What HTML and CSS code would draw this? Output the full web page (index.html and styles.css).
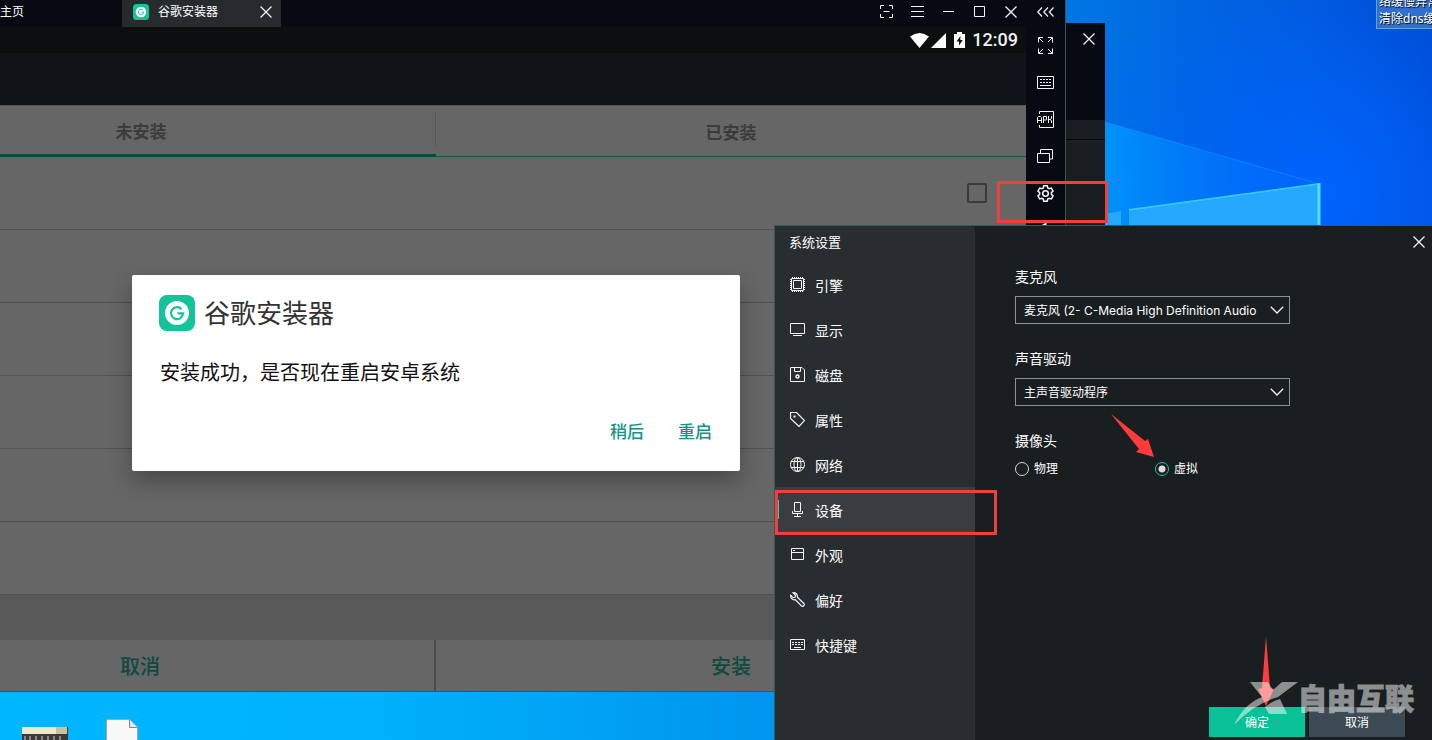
FILE: index.html
```html
<!DOCTYPE html>
<html lang="zh-CN">
<head>
<meta charset="utf-8">
<meta name="viewport" content="width=device-width, initial-scale=1">
<title>系统设置</title>
<link rel="stylesheet" href="styles.css">
</head>
<body>
<svg width="0" height="0" class="sprite" aria-hidden="true">
  <symbol id="close" viewBox="0 0 12 12"><path d="M.5.5l11 11M11.500.5l-11 11" stroke-width="1.300"/></symbol>
  <symbol id="keyboard" viewBox="0 0 17 13"><path d="M.5.5h16v12H.5zM3 3.500h2M6 3.500h2M9 3.500h2M12 3.500h2M3 6.500h2M6 6.500h2M9 6.500h2M12 6.500h2M3 9.500h11"/></symbol>
  <symbol id="chevron" viewBox="0 0 14 8"><path d="M.8.8L7 7 13.200.8" stroke-width="1.300"/></symbol>
  <symbol id="logo" viewBox="0 0 36 36"><rect width="36" height="36" rx="8" fill="#15c39a" stroke="none"/><circle cx="18" cy="18" r="12" fill="#fff" stroke="none"/><path d="M22.500 14.200A6 6 0 1 0 24 18.300H18.500" fill="none" stroke="#15c39a" stroke-width="2.200"/></symbol>
</svg>

<main class="desktop">
  <svg class="wallpaper" viewBox="0 0 327 225" aria-hidden="true">
    <defs><linearGradient id="beam" x1="0" x2="1"><stop offset="0" stop-color="#0098ff" stop-opacity=".85"/><stop offset="1" stop-color="#0068ff" stop-opacity=".25"/></linearGradient></defs>
    <path d="M0 122L214 184 214 225H0z" fill="url(#beam)"/>
    <path d="M0 122L214 184" stroke="#2298ff" stroke-opacity=".5"/>
    <path d="M0 214L16 211V225H0zM24 211L214 185V225H24z" fill="#27a8ff"/>
    <path d="M24 210L214 184" stroke="#35c8ff" stroke-width="2"/>
    <path d="M214 183V225" stroke="#48e5ff" stroke-width="3"/>
  </svg>

  <div class="shortcut">络缓慢异常<br>清除dns缓存</div>
  <svg class="desk-icon calendar" viewBox="0 0 46 40" aria-hidden="true"><path d="M0 0h46v40H0z" fill="#3b3a3a"/><path d="M0 0h45v7H0z" fill="#eee9cb"/><path d="M34 0h11v7H34z" fill="#c9c1a0"/><path d="M3 9v9M8 9v9M14 9v9M20 9v9M26 9v9M32 9v9M38 9v9" stroke="#8b857b" stroke-width="2"/></svg>
  <svg class="desk-icon document" viewBox="0 0 32 40" aria-hidden="true"><path d="M.5.5h23l8 8V40H.5z" fill="#f8f8f8" stroke="#9aa"/><path d="M23.500.5v8h8" fill="#e5e5e5" stroke="#888"/></svg>

  <section class="back-window">
    <header class="back-head"><button class="icon-btn" aria-label="关闭"><svg class="ico s12"><use href="#close"/></svg></button></header>
    <div class="back-row"></div>
    <div class="back-body"></div>
  </section>

  <section class="emulator">
    <div class="emu-main">
      <header class="titlebar">
        <a class="home" href="#">主页</a>
        <div class="app-tab"><svg class="ico s16"><use href="#logo"/></svg><span class="app-name">谷歌安装器</span><button class="icon-btn" aria-label="关闭标签"><svg class="ico s12"><use href="#close"/></svg></button></div>
        <div class="controls">
          <button class="icon-btn" aria-label="截图"><svg class="ico" width="13" height="13" viewBox="0 0 13 13"><path d="M.5 4V.5H4M9 .5h3.500V4M12.500 9v3.500H9M4 12.500H.5V9M3.500 6.500h6"/></svg></button>
          <button class="icon-btn" aria-label="菜单"><svg class="ico" width="13" height="13" viewBox="0 0 13 13"><path d="M0 1.500h13M0 6.500h13M0 11.500h13"/></svg></button>
          <button class="icon-btn" aria-label="最小化"><svg class="ico" width="13" height="13" viewBox="0 0 13 13"><path d="M1 6.500h11"/></svg></button>
          <button class="icon-btn" aria-label="最大化"><svg class="ico" width="13" height="13" viewBox="0 0 13 13"><path d="M1.500 1.500h10v10h-10z"/></svg></button>
          <button class="icon-btn" aria-label="关闭"><svg class="ico s12"><use href="#close"/></svg></button>
        </div>
      </header>
      <div class="screen">
        <div class="statusbar">
          <svg width="19" height="15" viewBox="0 0 19 15"><path d="M0 3.500Q9.500-3.500 19 3.500L9.500 15z" fill="#fff"/></svg>
          <svg class="signal" width="15" height="15" viewBox="0 0 15 15"><path d="M15 0v15H0z" fill="#fff"/></svg>
          <svg class="battery" width="11" height="16" viewBox="0 0 11 16"><path d="M3 0h5v2h3v14H0V2h3z" fill="#fff"/><path d="M6.500 4L2.500 9.500h2.500v4L8.800 8H6.300z" fill="#0b0f10"/></svg>
          <time>12:09</time>
        </div>
        <div class="app">
          <div class="appbar"></div>
          <nav class="tabs"><button class="tab current">未安装</button><button class="tab">已安装</button></nav>
          <div class="list">
            <div class="row"><input class="check" type="checkbox" aria-label="选择"></div>
            <div class="row"></div><div class="row"></div><div class="row"></div><div class="row"></div><div class="row"></div>
          </div>
          <div class="gap"></div>
          <footer class="actions"><button class="action">取消</button><button class="action">安装</button></footer>
          <div class="dialog" role="dialog" aria-labelledby="dlg-title">
            <h1 class="dialog-title" id="dlg-title"><svg class="ico s36"><use href="#logo"/></svg>谷歌安装器</h1>
            <p class="dialog-text">安装成功，是否现在重启安卓系统</p>
            <div class="dialog-actions"><button>稍后</button><button>重启</button></div>
          </div>
        </div>
      </div>
    </div>
    <aside class="toolbar">
      <button class="tool" aria-label="收起"><svg class="ico" width="17" height="10" viewBox="0 0 17 10"><path d="M5 .5L.8 5 5 9.500M11 .5L6.800 5 11 9.500M16.500.5L12.300 5l4.200 4.500" stroke-width="1.200"/></svg></button>
      <button class="tool" aria-label="全屏"><svg class="ico" width="17" height="17" viewBox="0 0 17 17"><path d="M1.500 5.500v-5H6M1.500.5L6 5M11 .5h4.500v5M15.500.5L11 5M1.500 11.500v5H6M1.500 16.500L6 12M11 16.500h4.500v-5M15.500 16.500L11 12"/></svg></button>
      <button class="tool" aria-label="键盘"><svg class="ico" width="17" height="13"><use href="#keyboard"/></svg></button>
      <button class="tool" aria-label="安装APK"><svg class="ico" width="17" height="17" viewBox="0 0 17 17"><path d="M2.500 3V.5h14v16h-14V14M.5 12V6.500l1-1h2l1 1V12M.5 9.500h4M6.500 12V5.500h3v3.500h-3M11.500 5v7M14.500 5v2l-1 1.500h-2M13.500 8.500l1 1.500v2"/></svg></button>
      <button class="tool" aria-label="多开"><svg class="ico" width="17" height="15" viewBox="0 0 17 15"><path d="M.5 4.500h12v9H.5zM3.500 4V.5h12v9.500H13"/></svg></button>
      <button class="tool" aria-label="设置"><svg class="ico gear" width="17" height="17" viewBox="0 0 18 18"><path d="M7.200.8h3.600l.6 2.400 1.400.8 2.400-.7 1.800 3.100-1.800 1.700v1.800l1.800 1.700-1.800 3.100-2.400-.7-1.400.8-.6 2.400H7.200l-.6-2.400-1.400-.8-2.400.7L1 11.600l1.800-1.700V8.100L1 6.400l1.800-3.100 2.400.7 1.400-.8z"/><circle cx="9" cy="9" r="3"/></svg></button>
      <button class="tool" aria-label="更多"><svg class="ico" width="9" height="15" viewBox="0 0 9 15"><path d="M1 3l3.500-2v13" stroke-width="2"/></svg></button>
    </aside>
  </section>
  <div class="mark mark-gear"></div>

  <section class="settings">
    <nav class="side">
      <h2 class="side-title">系统设置</h2>
      <a class="item" href="#"><svg class="ico" width="15" height="15" viewBox="0 0 15 15"><path d="M1.500 1.500h12v12h-12zM3.500 3.500h8v8h-8z"/><path d="M.5 2v11M14.500 2v11M2 .5h11M2 14.500h11" stroke-dasharray="1 1"/></svg><span>引擎</span></a>
      <a class="item" href="#"><svg class="ico" width="15" height="13" viewBox="0 0 15 13"><path d="M.5.5h14v10H.5zM3 12.500h9"/></svg><span>显示</span></a>
      <a class="item" href="#"><svg class="ico" width="15" height="15" viewBox="0 0 15 15"><path d="M.5.5h11.500l2.500 2.500v11.500H.5zM4.500.5v4h6v-4"/><circle cx="7.500" cy="9.500" r="1.500" stroke-width="1.500"/></svg><span>磁盘</span></a>
      <a class="item" href="#"><svg class="ico" width="15" height="15" viewBox="0 0 15 15"><path d="M.5.5h6l8 8-5.500 6L.5 6.500z" stroke-width="1.200"/><path d="M3.500 4.500h2" stroke-width="2"/></svg><span>属性</span></a>
      <a class="item" href="#"><svg class="ico" width="15" height="15" viewBox="0 0 15 15"><circle cx="7.500" cy="7.500" r="7"/><ellipse cx="7.500" cy="7.500" rx="3.500" ry="7"/><path d="M1 4.500h13M1 10.500h13M7.500.5v14"/></svg><span>网络</span></a>
      <a class="item active" href="#" aria-current="page"><svg class="ico" width="15" height="15" viewBox="0 0 15 15"><path d="M4.500.5h6v9h-6zM2.500 9v2.500h10V9M7.500 11.500v3M4 14.500h7"/></svg><span>设备</span><i class="mark mark-item"></i></a>
      <a class="item" href="#"><svg class="ico" width="15" height="13" viewBox="0 0 15 13"><path d="M1.500.5h12v11h-12zM1.500 4.500h12M3 2.500h2"/></svg><span>外观</span></a>
      <a class="item" href="#"><svg class="ico" width="15" height="15" viewBox="0 0 15 15"><path d="M3 .8l2.500 2.500-.5 2-2 .3L.8 3.200c-.6 2.800 1.400 5 4.500 4.500l6.200 6.300q1.200.8 2.300-.2.900-1.200 0-2.300L7.400 5.300C7.800 2.300 5.500.2 3 .8z" stroke-width="1.200"/></svg><span>偏好</span></a>
      <a class="item" href="#"><svg class="ico" width="15" height="11" viewBox="0 0 15 11"><path d="M.5.5h14v10H.5zM2 3.500h2M5 3.500h2M8 3.500h2M11 3.500h2M2 5.500h2M5 5.500h2M8 5.500h2M11 5.500h2M4 8.500h7"/></svg><span>快捷键</span></a>
    </nav>
    <form class="panel">
      <div class="panel-head"><button type="button" class="icon-btn" aria-label="关闭"><svg class="ico s12"><use href="#close"/></svg></button></div>
      <div class="fields">
        <div class="field"><label for="mic">麦克风</label><div class="select"><select id="mic"><option>麦克风 (2- C-Media High Definition Audio</option></select><svg class="ico" width="14" height="8"><use href="#chevron"/></svg></div></div>
        <div class="field"><label for="sound">声音驱动</label><div class="select"><select id="sound"><option>主声音驱动程序</option></select><svg class="ico" width="14" height="8"><use href="#chevron"/></svg></div></div>
        <fieldset class="camera"><legend>摄像头</legend><div class="radios"><label><input type="radio" name="cam">物理</label><label><input type="radio" name="cam" checked>虚拟</label></div></fieldset>
      </div>
      <div class="buttons"><button type="button" class="btn ok">确定</button><button type="button" class="btn cancel">取消</button></div>
      <svg class="arrow arrow-radio" viewBox="0 0 43 43" aria-hidden="true"><path d="M0 0L34 27 37 25 43 43 25 38 28 35z" fill="#ff3b3b"/></svg>
      <svg class="arrow arrow-ok" viewBox="0 0 16 70" aria-hidden="true"><path d="M8 0L12 52 16 53 8 70 0 53 4 52z" fill="#ff3b3b"/></svg>
      <div class="watermark"><svg width="64" height="44" viewBox="0 0 64 44" aria-hidden="true"><path d="M16 0H34L39 8 48 0H64L44 15Q20 22 0 43 10 22 28 15zM46 17L53 32H35L31 25Q38 19 46 17z" fill="#fff"/></svg><span>自由互联</span></div>
    </form>
  </section>
</main>
</body>
</html>
```
FILE: styles.css
```css
* { box-sizing: border-box; }
body {
  margin: 0;
  font-family: "Noto Sans", "Noto Sans CJK SC", sans-serif;
  font-size: 12px;
  color: #fff;
}
button { font: inherit; color: inherit; background: none; border: 0; padding: 0; cursor: pointer; }
a { color: inherit; text-decoration: none; }
.sprite { position: absolute; }
.ico { fill: none; stroke: #f2f4f5; stroke-width: 1; flex: none; display: block; }
.gear { stroke-width: 1.6; }
.s12 { width: 12px; height: 12px; }
.s16 { width: 16px; height: 16px; }
.s36 { width: 36px; height: 36px; }
.icon-btn { display: grid; place-items: center; }

.desktop {
  position: relative;
  min-height: 100vh;
  overflow: hidden;
  background:
    radial-gradient(circle at 92% 26%, #0064ff 0, rgba(0, 100, 255, 0) 18%),
    linear-gradient(90deg, #00b6ff 0, #00b2fc 25%, #0095ee 54%, #0074e4 76%, #0048cc 100%);
}
.wallpaper { position: absolute; top: 0; right: 0; width: 327px; height: 225px; fill: none; }
.shortcut {
  position: absolute;
  top: -8px;
  left: calc(100% - 56px);
  padding: 0 2px 1px;
  border: 1px solid #6c9fe8;
  background: #2f70d0;
  line-height: 17px;
  white-space: nowrap;
  text-shadow: 1px 1px 1px #000;
}
.desk-icon { position: absolute; height: 40px; }
.calendar { left: 22px; bottom: -27px; width: 46px; }
.document { left: 106px; bottom: -19px; width: 32px; }

.back-window {
  position: absolute;
  top: 23px;
  bottom: 200px;
  right: 327px;
  width: 120px;
  display: flex;
  flex-direction: column;
  background: #191e20;
}
.back-head { height: 97px; padding: 10px 10px 0 0; background: #060b13; display: flex; justify-content: flex-end; align-items: flex-start; }
.back-row { height: 20px; border-bottom: 1px solid #05090b; }
.back-body { flex: 1; }

.emulator {
  position: absolute;
  inset: 0 366px auto 0;
  display: flex;
  border-right: 1px solid #3b5550;
  background: #060b13;
}
.emu-main { flex: 1; min-width: 0; overflow: hidden; }
.titlebar { height: 27px; display: flex; align-items: stretch; line-height: 24px; }
.home { width: 122px; }
.app-tab { width: 159px; padding: 0 9px 3px 11px; display: flex; align-items: center; background: #262b2e; }
.app-name { flex: 1; padding-left: 9px; }
.controls { margin-left: auto; padding-bottom: 4px; display: flex; }
.controls .icon-btn { width: 31px; }

.screen { margin-left: -154px; background: #0f1416; }
.statusbar { height: 26px; padding-right: 8px; display: flex; align-items: center; justify-content: flex-end; background: #0b0f10; font: 500 18px/28px Roboto, sans-serif; color: #f2f2f2; }
.signal { margin-left: 2px; }
.battery { margin: 0 7px 0 8px; }
.app { position: relative; }
.appbar { height: 52px; }
.tabs { display: grid; grid-template-columns: 1fr 1fr; height: 52px; background: #666; color: #3b3b3b; border-top: 1px solid #585858; }
.tab { font-size: 17px; font-weight: 700; border-bottom: 1px solid #214f47; }
.tab.current { border-bottom: 3px solid #10483c; background: linear-gradient(#575757, #575757) right 50% / 1px 34px no-repeat; }
.list { background: #666; }
.row { height: 73px; padding: 0 39px; display: flex; align-items: center; justify-content: flex-end; border-bottom: 1px solid #515151; }
.check { appearance: none; width: 20px; height: 20px; margin: 0; border: 2px solid #3a3a3a; border-radius: 2px; }
.gap { height: 45px; background: #595959; }
.actions { display: grid; grid-template-columns: 1fr 1fr; height: 52px; background: #666; color: #0e4a40; border-bottom: 1px solid #2d5b60; }
.action { font-size: 20px; font-weight: 500; }
.action:first-child { border-right: 2px solid #4d4d4d; }

.dialog {
  position: absolute;
  top: 50%;
  left: 50%;
  transform: translate(-50%, -50%);
  width: 608px;
  padding: 20px 28px 23px;
  border-radius: 2px;
  background: #fff;
  color: #222;
  box-shadow: 0 10px 22px rgba(0, 0, 0, .3);
}
.dialog-title { margin: 0 -1px; display: flex; align-items: center; gap: 9px; font-size: 26px; line-height: 36px; font-weight: 400; color: #333; }
.dialog-text { margin: 28px 0 29px; font-size: 20px; line-height: 28px; color: #111; }
.dialog-actions { display: flex; justify-content: flex-end; gap: 34px; font-size: 17px; line-height: 32px; font-weight: 500; color: #109684; }

.toolbar { width: 39px; display: flex; flex-direction: column; align-items: center; overflow: hidden; }
.tool { width: 39px; height: 37px; display: grid; place-items: center; }
.tool:first-child { height: 27px; padding-bottom: 3px; }

.mark { position: absolute; border: 3px solid #f0403e; pointer-events: none; }
.mark-gear { top: 181px; right: 324px; width: 111px; height: 42px; }
.mark-item { inset: 3px -22px -3px 0; }

.settings {
  position: absolute;
  top: 225px;
  right: 0;
  bottom: 0;
  width: 658px;
  display: flex;
  border-top: 1px solid #2f5c5c;
  border-left: 1px solid #2f5c5c;
  background: #191e20;
}
.side { width: 200px; background: #282d30; }
.side-title { margin: 0; padding: 0 14px; font-size: 13px; line-height: 32px; font-weight: 400; height: 36px; }
.item { position: relative; height: 45px; padding: 0 15px; display: flex; align-items: center; gap: 10px; font-size: 14px; line-height: 20px; }
.item span { padding-top: 2px; }
.item.active { background: #393d40; }
.item.active::before { content: ""; position: absolute; left: 3px; top: 13px; width: 1px; height: 19px; background: #38cbb4; }
.panel { position: relative; flex: 1; display: flex; flex-direction: column; }
.panel-head { height: 31px; padding-right: 7px; display: flex; justify-content: flex-end; align-items: center; }
.fields { flex: 1; padding: 9px 40px; }
.field { width: 275px; margin-bottom: 24px; }
.field label, legend { display: block; padding: 0; font-size: 14px; line-height: 22px; margin-bottom: 8px; }
.select { position: relative; height: 28px; }
.select select { appearance: none; width: 100%; height: 28px; margin: 0; padding: 0 26px 0 8px; border: 1px solid #8b9295; border-radius: 0; background: #191e20; color: #fff; font: 12px Inter, "Noto Sans CJK SC", sans-serif; }
.select .ico { position: absolute; right: 6px; top: 10px; pointer-events: none; }
.camera { margin: 0; padding: 0; border: 0; }
.camera legend { margin-bottom: 7px; }
.radios { display: flex; }
.radios label { width: 140px; display: flex; align-items: center; gap: 5px; line-height: 20px; }
.radios input { appearance: none; width: 14px; height: 14px; margin: 0; border: 1px solid #d4d6d7; border-radius: 50%; }
.radios input:checked { border-color: #1ec59c; background: radial-gradient(circle, #e5dcdc 0 3px, transparent 4px); }
.buttons { display: flex; justify-content: flex-end; gap: 4px; padding: 0 27px 3px; }
.btn { width: 96px; height: 30px; }
.ok { background: #08c197; }
.cancel { background: #3c4a54; }
.arrow { position: absolute; }
.arrow-radio { left: 136px; top: 188px; width: 43px; height: 43px; }
.arrow-ok { right: 158px; bottom: 34px; width: 16px; height: 70px; }
.watermark { position: absolute; right: 18px; bottom: 14px; display: flex; align-items: flex-start; opacity: .5; font-size: 29px; line-height: 34px; font-weight: 900; pointer-events: none; color: #fff; -webkit-text-stroke: 1px #fff; }
```
